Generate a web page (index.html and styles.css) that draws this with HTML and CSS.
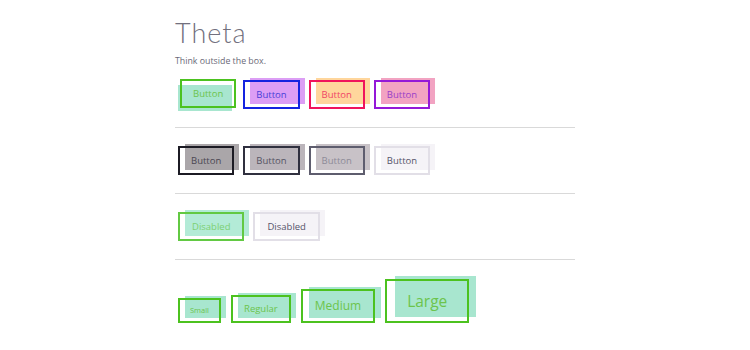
FILE: index.html
```html
<!DOCTYPE html>
<html lang="en">

<head>
    <meta charset="UTF-8">
    <meta name="viewport" content="width=device-width, initial-scale=1.0">
    <title>Theta</title>
    <link rel="stylesheet" href="styles.css">
</head>

<body>
    <main class="page">
        <header class="intro">
            <h1 class="title">Theta</h1>
            <p class="tagline">Think outside the box.</p>
        </header>

        <section class="row row-first">
            <button class="btn btn-green is-active">Button</button>
            <button class="btn btn-blue">Button</button>
            <button class="btn btn-red">Button</button>
            <button class="btn btn-purple">Button</button>
        </section>

        <section class="row">
            <button class="btn btn-black">Button</button>
            <button class="btn btn-dark">Button</button>
            <button class="btn btn-grey">Button</button>
            <button class="btn btn-light">Button</button>
        </section>

        <section class="row">
            <button class="btn btn-green is-disabled">Disabled</button>
            <button class="btn btn-light is-disabled">Disabled</button>
        </section>

        <section class="row row-sizes">
            <button class="btn btn-green btn-small">Small</button>
            <button class="btn btn-green btn-regular">Regular</button>
            <button class="btn btn-green btn-medium">Medium</button>
            <button class="btn btn-green btn-large">Large</button>
        </section>
    </main>
</body>

</html>
```

FILE: styles.css
```css
* {
    box-sizing: border-box;
}

body {
    margin: 0;
    background: #ffffff;
    font-family: "Open Sans", Lato, sans-serif;
    color: #6b6a78;
}

.page {
    width: 400px;
    margin: 0 auto;
    padding-top: 16px;
}

.title {
    margin: 0;
    font-family: Lato, "Open Sans", sans-serif;
    font-size: 27px;
    line-height: 34px;
    font-weight: 300;
    letter-spacing: 1px;
    color: #72707e;
}

.tagline {
    margin: 5px 0 0;
    font-size: 8.8px;
    line-height: 12px;
    color: #6b6a78;
}

.row {
    display: flex;
    align-items: flex-end;
    gap: 9px;
    padding: 18px 3px;
    border-top: 1px solid #d9d9d9;
}

.row-first {
    border-top: 0;
    padding-top: 13px;
}

.row-sizes {
    gap: 10px;
    padding-top: 19px;
    padding-bottom: 0;
}

/* the fill sits off the box, the outline stays put */
.btn {
    --fill: #a8e6cf;
    --line: #4cc21f;
    --ink: #6cc44c;
    position: relative;
    isolation: isolate;
    padding: 7px 13px;
    border: 0;
    background: none;
    font-family: inherit;
    font-size: 9.5px;
    line-height: 15px;
    color: var(--ink);
    cursor: pointer;

    &::before,
    &::after {
        content: "";
        position: absolute;
        z-index: -1;
    }

    &::before {
        left: 7px;
        top: -2px;
        right: -5px;
        bottom: 5px;
        background: var(--fill);
    }

    &::after {
        inset: 0;
        border: 2px solid var(--line);
    }
}

.btn.is-active {
    transform: translate(2px, -1px);

    &::before {
        left: -2px;
        top: 6px;
        right: 4px;
        bottom: -3px;
    }
}

.btn.is-disabled {
    padding-left: 14px;
    padding-right: 14px;
}

.btn-green {
    --fill: #a8e6cf;
    --line: #4cc21f;
    --ink: #6cc44c;
}

.btn-blue {
    --fill: #dc9ef5;
    --line: #1423e0;
    --ink: #4a3ed8;
}

.btn-red {
    --fill: #ffd69c;
    --line: #f0145c;
    --ink: #f04466;
}

.btn-purple {
    --fill: #f2a3c2;
    --line: #9418d8;
    --ink: #9a40c8;
}

.btn-black {
    --fill: #aaa6a9;
    --line: #1c1b24;
    --ink: #4a4652;
}

.btn-dark {
    --fill: #bbb5bb;
    --line: #30303f;
    --ink: #565464;
}

.btn-grey {
    --fill: #c8c2c7;
    --line: #5e5d6e;
    --ink: #8e8b98;
}

.btn-light {
    --fill: #f5f3f7;
    --line: #e2dfe7;
    --ink: #55546a;
}

.btn-green.is-disabled {
    --fill: #b3ebd7;
    --line: #62c943;
    --ink: #7cd072;
}

.btn-small {
    padding: 6px 12px;
    font-size: 7.5px;
    line-height: 13px;
}

.btn-regular {
    padding: 7px 13px;
    font-size: 9.5px;
    line-height: 14px;
}

.btn-medium {
    padding: 8px 14px;
    font-size: 12px;
    line-height: 18px;

    &::before {
        left: 8px;
        right: -6px;
    }
}

.btn-large {
    padding: 11px 22px;
    font-size: 15.5px;
    line-height: 22px;

    &::before {
        left: 10px;
        top: -3px;
        right: -7px;
        bottom: 6px;
    }
}
```
